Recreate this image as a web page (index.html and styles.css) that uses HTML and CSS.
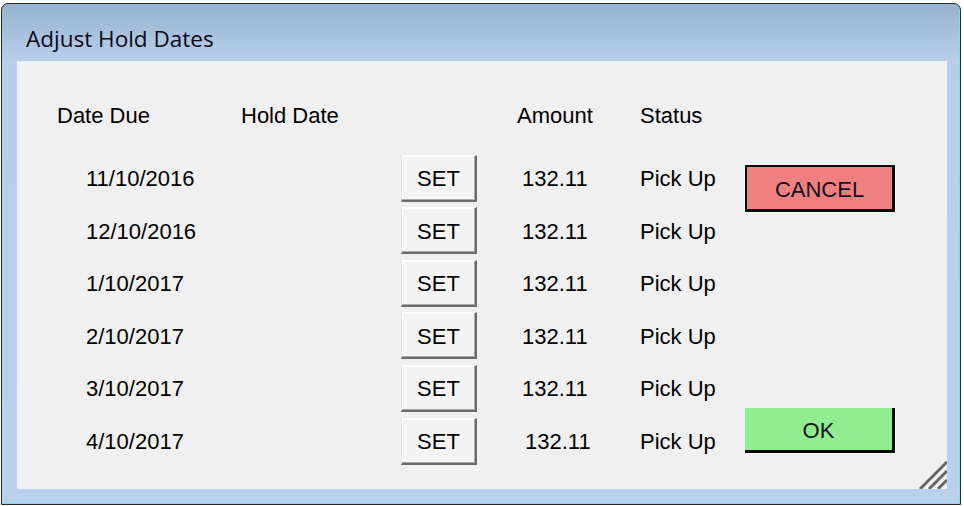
FILE: index.html
```html
<!DOCTYPE html>
<html>
<head>
<meta charset="utf-8">
<title>Adjust Hold Dates</title>
<link rel="stylesheet" href="styles.css">
</head>
<body>
<div class="window">
  <div class="titlebar">Adjust Hold Dates</div>
  <div class="client">
    <div class="table">
      <div class="row head">
        <div class="c-date">Date Due</div>
        <div class="c-hold">Hold Date</div>
        <div class="c-set"></div>
        <div class="c-amt">Amount</div>
        <div class="c-status">Status</div>
      </div>
      <div class="row">
        <div class="c-date val">11/10/2016</div>
        <div class="c-hold"></div>
        <div class="c-set"><button class="set">SET</button></div>
        <div class="c-amt val">132.11</div>
        <div class="c-status">Pick Up</div>
      </div>
      <div class="row">
        <div class="c-date val">12/10/2016</div>
        <div class="c-hold"></div>
        <div class="c-set"><button class="set">SET</button></div>
        <div class="c-amt val">132.11</div>
        <div class="c-status">Pick Up</div>
      </div>
      <div class="row">
        <div class="c-date val">1/10/2017</div>
        <div class="c-hold"></div>
        <div class="c-set"><button class="set">SET</button></div>
        <div class="c-amt val">132.11</div>
        <div class="c-status">Pick Up</div>
      </div>
      <div class="row">
        <div class="c-date val">2/10/2017</div>
        <div class="c-hold"></div>
        <div class="c-set"><button class="set">SET</button></div>
        <div class="c-amt val">132.11</div>
        <div class="c-status">Pick Up</div>
      </div>
      <div class="row">
        <div class="c-date val">3/10/2017</div>
        <div class="c-hold"></div>
        <div class="c-set"><button class="set">SET</button></div>
        <div class="c-amt val">132.11</div>
        <div class="c-status">Pick Up</div>
      </div>
      <div class="row">
        <div class="c-date val">4/10/2017</div>
        <div class="c-hold"></div>
        <div class="c-set"><button class="set">SET</button></div>
        <div class="c-amt val last">132.11</div>
        <div class="c-status">Pick Up</div>
      </div>
    </div>
    <div class="actions">
      <button class="btn cancel">CANCEL</button>
      <button class="btn ok">OK</button>
    </div>
    <svg class="grip" width="28" height="28" viewBox="0 0 28 28">
      <g stroke="#666666" stroke-width="3">
        <line x1="28" y1="1" x2="1" y2="28"/>
        <line x1="28" y1="10" x2="10" y2="28"/>
        <line x1="28" y1="19" x2="19" y2="28"/>
      </g>
    </svg>
  </div>
</div>
</body>
</html>
```
FILE: styles.css
```css
html, body {
  margin: 0;
  padding: 0;
  background: #ffffff;
}

body {
  font-family: "Liberation Sans", Arial, sans-serif;
  color: #000;
}

.window {
  margin: 3px 0 0 1px;
  width: 960px;
  height: 502px;
  box-sizing: border-box;
  border: 1px solid #2a2a2a;
  border-radius: 7px 7px 0 0;
  background: linear-gradient(to bottom, #97b2cf 0, #b7cfe9 57px, #b9d1ea 100%);
  box-shadow: inset -1px -1px 0 #6fe2f4;
  padding: 0 13px 15px 15px;
}

.titlebar {
  height: 57px;
  box-sizing: border-box;
  padding: 20px 0 0 9px;
  font-family: "Open Sans", "Noto Sans", sans-serif;
  font-size: 22.5px;
  line-height: 30px;
  color: #0a0a1a;
}

.client {
  position: relative;
  width: 930px;
  height: 428px;
  background: #f0f0f0;
  display: flex;
}

.table {
  padding: 42px 0 0 40px;
  display: flex;
  flex-direction: column;
  gap: 5.6px;
}

.row {
  display: grid;
  grid-template-columns: 184px 160px 76px 163px 105px;
  height: 47px;
  align-items: center;
  font-size: 22px;
  line-height: 26px;
}

.row > div {
  padding-top: 2px;
}

.row.head {
  height: 26px;
  margin-bottom: 20px;
}

.row.head > div {
  padding-top: 0;
}

.row.head .c-set {
  height: 26px;
}

.c-date.val {
  padding-left: 29px;
}

.c-amt {
  padding-left: 40px;
}

.c-amt.val {
  padding-left: 45px;
}

.c-amt.val.last {
  padding-left: 48px;
}

.row > .c-set {
  height: 47px;
  padding-top: 0;
}

.set {
  width: 76px;
  height: 47px;
  box-sizing: border-box;
  margin: 0;
  padding: 3px 0 0;
  background: #f4f4f4;
  border-style: solid;
  border-width: 1px 2px 2px 1px;
  border-color: #ffffff #6b6b6b #6b6b6b #e3e3e3;
  box-shadow: inset -1px -1px 0 #a8a8a8, inset 1px 1px 0 #ffffff;
  font-family: "Liberation Sans", Arial, sans-serif;
  font-size: 22px;
  color: #000;
}

.actions {
  display: flex;
  flex-direction: column;
  padding-top: 104px;
  gap: 196px;
}

.btn {
  width: 150px;
  box-sizing: border-box;
  margin: 0;
  padding: 3px 0 0;
  font-family: "Liberation Sans", Arial, sans-serif;
  font-size: 22px;
  color: #111122;
}

.cancel {
  height: 47px;
  background: #f08080;
  border-style: solid;
  border-color: #000;
  border-width: 2px 3px 3px 2px;
  box-shadow: 0 0 0 1px #ffffff;
}

.ok {
  height: 45px;
  background: #90ee90;
  border-style: solid;
  border-color: #90ee90 #000 #000 #90ee90;
  border-width: 0 3px 3px 0;
  box-shadow: 1px 1px 0 #ffffff;
}

.grip {
  position: absolute;
  right: 0;
  bottom: 0;
}
```
